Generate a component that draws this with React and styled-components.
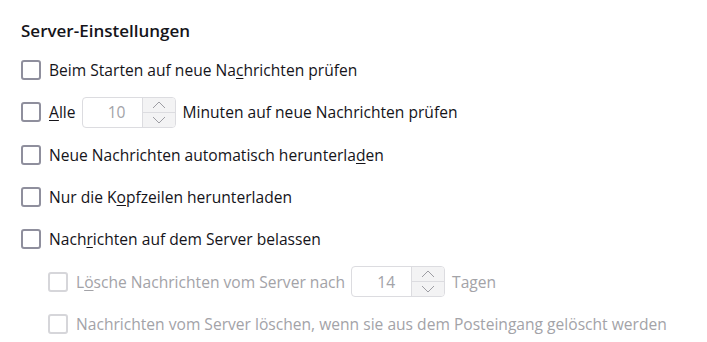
import styled, { createGlobalStyle } from 'styled-components';

const GlobalStyle = createGlobalStyle`
  body {
    margin: 0;
    background: #fff;
    font-family: "Open Sans", "Noto Sans", sans-serif;
    color: #15141a;
  }
`;

const Page = styled.div`
  padding: 20px 0 0 21px;
`;

const Heading = styled.h2`
  margin: 0 0 7px 0;
  font-size: 17px;
  font-weight: 600;
  line-height: 22px;
`;

const Row = styled.div`
  display: flex;
  align-items: center;
  height: 42.33px;
  padding-left: ${p => (p.$indent ? '27px' : '0')};
  color: ${p => (p.$disabled ? '#a3a3a8' : '#15141a')};
  font-size: 15.6px;
`;

const Box = styled.span`
  box-sizing: border-box;
  width: 20px;
  height: 20px;
  border: 2px solid ${p => (p.$disabled ? '#d6d6da' : '#8f8f9d')};
  border-radius: 3px;
  margin-right: 8px;
  flex: none;
`;

const Label = styled.span`
  white-space: nowrap;
`;

const Key = styled.u`
  text-underline-offset: 2px;
`;

const Spinner = styled.span`
  display: inline-flex;
  box-sizing: border-box;
  width: 94px;
  height: 31px;
  margin: 0 7px 0 6px;
  border: 1px solid #dcdce0;
  border-radius: 4px;
  overflow: hidden;
`;

const SpinValue = styled.span`
  flex: 1;
  display: flex;
  align-items: center;
  justify-content: flex-end;
  padding-right: 16px;
  color: #a3a3a8;
  font-size: 15.6px;
`;

const SpinButtons = styled.span`
  display: flex;
  flex-direction: column;
  width: 32px;
  border-left: 1px solid #dcdce0;
  background: #f3f3f4;
`;

const SpinHalf = styled.span`
  flex: 1;
  display: flex;
  align-items: center;
  justify-content: center;
  border-top: ${p => (p.$lower ? '1px solid #dcdce0' : 'none')};
`;

function Chevron({ up }) {
  return (
    <svg width="14" height="8" viewBox="0 0 14 8">
      <path
        d={up ? 'M1 7 L7 1 L13 7' : 'M1 1 L7 7 L13 1'}
        fill="none"
        stroke="#9d9da3"
        strokeWidth="1"
      />
    </svg>
  );
}

function NumberBox({ value }) {
  return (
    <Spinner>
      <SpinValue>{value}</SpinValue>
      <SpinButtons>
        <SpinHalf><Chevron up /></SpinHalf>
        <SpinHalf $lower><Chevron /></SpinHalf>
      </SpinButtons>
    </Spinner>
  );
}

function Option({ disabled, indent, children }) {
  return (
    <Row $disabled={disabled} $indent={indent}>
      <Box $disabled={disabled} />
      {children}
    </Row>
  );
}

export default function App() {
  return (
    <Page>
      <GlobalStyle />
      <Heading>Server-Einstellungen</Heading>
      <Option>
        <Label>Beim Starten auf neue Na<Key>c</Key>hrichten prüfen</Label>
      </Option>
      <Option>
        <Label><Key>A</Key>lle</Label>
        <NumberBox value="10" />
        <Label>Minuten auf neue Nachrichten prüfen</Label>
      </Option>
      <Option>
        <Label>Neue Nachrichten automatisch herunterla<Key>d</Key>en</Label>
      </Option>
      <Option>
        <Label>Nur die K<Key>o</Key>pfzeilen herunterladen</Label>
      </Option>
      <Option>
        <Label>Nach<Key>r</Key>ichten auf dem Server belassen</Label>
      </Option>
      <Option disabled indent>
        <Label>L<Key>ö</Key>sche Nachrichten vom Server nach</Label>
        <NumberBox value="14" />
        <Label>Tagen</Label>
      </Option>
      <Option disabled indent>
        <Label>Nachrichten vom Server löschen, wenn sie aus dem Posteingang gelöscht werden</Label>
      </Option>
    </Page>
  );
}
